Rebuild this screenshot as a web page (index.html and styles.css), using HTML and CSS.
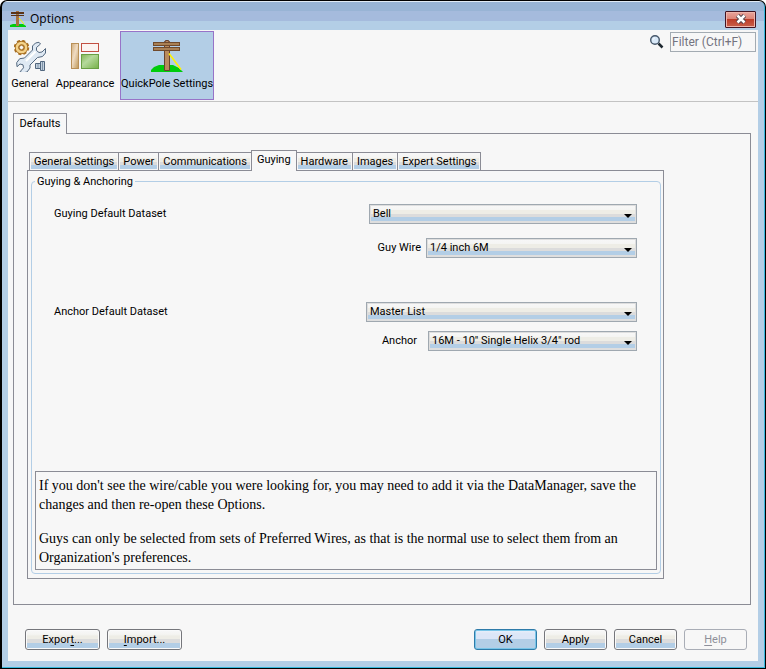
FILE: index.html
```html
<!DOCTYPE html>
<html lang="en">
<head>
<meta charset="utf-8">
<meta name="viewport" content="width=device-width, initial-scale=1">
<title>Options</title>
<link rel="stylesheet" href="styles.css">
</head>
<body>
<div class="window">
  <header class="titlebar">
    <svg class="title-icon" viewBox="0 0 16 16" aria-hidden="true">
      <path d="M0 16v-2l3-1h10l3 2v1z" fill="#00cc0c"/>
      <rect x="6" y="0" width="3" height="15" fill="#a6703f"/>
      <path d="M1 1h13v2H1zM1 4h13v1H1z" fill="#5b3417"/>
      <path d="M9 7l5 6" stroke="#fff200"/>
    </svg>
    <h1 class="title">Options</h1>
    <button class="close" type="button" aria-label="Close">
      <svg viewBox="0 0 12 10" width="12" height="10"><path d="M2.500 1.500 9.500 8.500M9.500 1.500 2.500 8.500" stroke="#4d424b" stroke-width="4.500"/><path d="M2.500 1.500 9.500 8.500M9.500 1.500 2.500 8.500" stroke="#fff" stroke-width="2.500"/></svg>
    </button>
  </header>
  <main class="content">
    <div class="toolbar">
      <nav class="categories" aria-label="Categories">
        <button class="category category-small" type="button">
          <svg width="32" height="32" viewBox="0 0 32 32" fill="none" aria-hidden="true">
            <circle cx="7.500" cy="7.500" r="6" stroke="#a86f22" stroke-width="3.500" stroke-dasharray="2.700 2"/>
            <circle cx="7.500" cy="7.500" r="4.500" stroke="#a86f22" stroke-width="4.500"/>
            <circle cx="7.500" cy="7.500" r="4.600" stroke="#f4d28a" stroke-width="2.500"/>
            <circle cx="7.500" cy="7.500" r="2.200" fill="#f7f7f7" stroke="#a86f22"/>
            <path d="m26.500 4-4 3.500v3l2.500 2 3-.5 3.500-3.500v4.500l-3 3.500-5 1-7.500 7.500v3l-3 4-4 .8-3-1 3.500-4-.5-3-3-.8-3 2.700-.3-4 3-4 4.800-.7 8-8V6l3-3 3.500-.7z" fill="#dfe9f3" stroke="#52677e" stroke-linejoin="round"/>
            <path d="m12 21 9.500-9.500" stroke="#fff" stroke-width="2"/>
            <path d="M21.500 23.500h5v5h-5zM26.500 21.500h4v9h-4z" fill="#c3d1de" stroke="#52677e"/>
            <path d="M24 24v4M28.500 22v8" stroke="#7f93a8"/>
          </svg>
          <span>General</span>
        </button>
        <button class="category" type="button">
          <svg width="32" height="32" viewBox="0 0 32 32" aria-hidden="true">
            <defs>
              <linearGradient id="tan" x2="1" y2="1"><stop offset="0" stop-color="#d0ad7c"/><stop offset=".45" stop-color="#f0dcc3"/><stop offset="1" stop-color="#bd9656"/></linearGradient>
              <linearGradient id="green" x2="1" y2="1"><stop offset="0" stop-color="#83b656"/><stop offset=".4" stop-color="#b5d99c"/><stop offset="1" stop-color="#75b047"/></linearGradient>
            </defs>
            <rect x="2.500" y="3.500" width="7" height="25" fill="url(#tan)" stroke="#b99058"/>
            <rect x="12.500" y="3.500" width="17" height="8" fill="#fbf4f2" stroke="#c24f42"/>
            <rect x="12.500" y="14.500" width="17" height="14" fill="url(#green)" stroke="#699f43"/>
          </svg>
          <span>Appearance</span>
        </button>
        <button class="category category-active" type="button" aria-pressed="true">
          <svg width="32" height="32" viewBox="0 0 32 32" aria-hidden="true">
            <path d="M0 32v-2l3-3 5-2h14l6 3 4 4z" fill="#00cc0c"/>
            <path d="M13.500 30.500V1.500h1v-1h3v1h1v29z" fill="#b98a5e" stroke="#68432f"/>
            <rect x="2.500" y="2.500" width="26" height="3" fill="#a98054" stroke="#704a2c"/>
            <rect x="2.500" y="7.500" width="26" height="3" fill="#a98054" stroke="#704a2c"/>
            <path d="M18 13.500 30 29.500" stroke="#fff200" stroke-width="1.500"/>
          </svg>
          <span>QuickPole Settings</span>
        </button>
      </nav>
      <div class="search">
        <svg width="14" height="14" viewBox="0 0 14 14" fill="none" aria-hidden="true">
          <path d="m8.500 8.500 4 4" stroke="#1e2830" stroke-width="2.500"/>
          <circle cx="5" cy="5" r="4.300" fill="#d9e9f8" stroke="#46576a" stroke-width="1.400"/>
          <path d="M3 5c0-1 1-2 2-2" stroke="#fff"/>
        </svg>
        <input class="filter" type="text" placeholder="Filter (Ctrl+F)" aria-label="Filter">
      </div>
    </div>

    <section class="settings">
      <div class="outer-tabs" role="tablist" aria-label="Pages">
        <button class="outer-tab" type="button" role="tab" aria-selected="true">Defaults</button>
      </div>
      <div class="outer-panel" role="tabpanel">
        <div class="tabs" role="tablist" aria-label="Defaults">
          <button class="tab" type="button" role="tab">General Settings</button>
          <button class="tab" type="button" role="tab">Power</button>
          <button class="tab" type="button" role="tab">Communications</button>
          <button class="tab tab-active" type="button" role="tab" aria-selected="true">Guying</button>
          <button class="tab" type="button" role="tab">Hardware</button>
          <button class="tab" type="button" role="tab">Images</button>
          <button class="tab" type="button" role="tab">Expert Settings</button>
        </div>
        <div class="panel" role="tabpanel">
          <fieldset class="group">
            <legend>Guying &amp; Anchoring</legend>
            <div class="fields">
              <div class="row">
                <label class="main-label" for="guying">Guying Default Dataset</label>
                <span class="combo combo-guying"><select id="guying"><option>Bell</option></select></span>
              </div>
              <div class="row row-sub">
                <label for="wire">Guy Wire</label>
                <span class="combo combo-wire"><select id="wire"><option>1/4 inch 6M</option></select></span>
              </div>
              <div class="row row-anchor">
                <label class="main-label" for="anchors">Anchor Default Dataset</label>
                <span class="combo combo-anchors"><select id="anchors"><option>Master List</option></select></span>
              </div>
              <div class="row row-last">
                <label for="anchor">Anchor</label>
                <span class="combo combo-anchor"><select id="anchor"><option>16M - 10" Single Helix 3/4" rod</option></select></span>
              </div>
            </div>
            <div class="note">
              <p>If you don't see the wire/cable you were looking for, you may need to add it via the DataManager, save the changes and then re-open these Options.</p>
              <p>Guys can only be selected from sets of Preferred Wires, as that is the normal use to select them from an Organization's preferences.</p>
            </div>
          </fieldset>
        </div>
      </div>
    </section>

    <footer class="actions">
      <button class="button button-wide" type="button"><span>Expor<u>t</u>...</span></button>
      <button class="button button-wide" type="button"><span><u>I</u>mport...</span></button>
      <span class="spacer"></span>
      <button class="button button-default" type="button">OK</button>
      <button class="button" type="button">Apply</button>
      <button class="button" type="button">Cancel</button>
      <button class="button" type="button" disabled><span><u>H</u>elp</span></button>
    </footer>
  </main>
</div>
</body>
</html>
```
FILE: styles.css
```css
* { box-sizing: border-box; }

:root {
  --face: #f7f7f7;
  --blue: #b3cee6;
  --line: #8b8c95;
  --ui: Roboto, "Noto Sans", sans-serif;
  --shade: linear-gradient(#f7f7f7 0, #f4f4f1 20%, #eeede6 30%, #eeede6 48%, #dcdcdc 48%, #dcdcdc 68%, #b3cee6 68%);
  --shade-low: linear-gradient(#f7f7f7 0, #f5f5f3 24%, #eeede6 24%, #eeede6 52%, #dcdcdc 52%, #dcdcdc 73%, #b3cee6 73%);
}

body { margin: 0; background: #fff; font: 11px/14px var(--ui); color: #000; }
button, input, select { font: inherit; color: inherit; margin: 0; }
button { cursor: default; white-space: nowrap; }

.window {
  display: flex;
  flex-direction: column;
  min-height: 100vh;
  padding: 1px 7px 7px 6px;
  border: solid #000;
  border-width: 1px 1px 1px 2px;
  border-radius: 7px 7px 0 0;
  background: linear-gradient(#e0ebf5 0, #e0ebf5 1px, #98b4d5 1px, #98b4d5 10px, #a5bbdd 10px, #a5bbdd 20px, #b3cee6 20px);
  box-shadow: inset -1px -1px #38b8dc;
}

.titlebar { display: flex; align-items: center; height: 28px; padding: 6px 2px 0 2px; }
.title-icon { width: 16px; height: 16px; }
.title { flex: 1; margin: 0 0 0 4px; font: 12px/16px "Open Sans", sans-serif; }
.close {
  display: flex;
  align-items: center;
  justify-content: center;
  width: 31px;
  height: 17px;
  padding: 0;
  border: 1px solid #431422;
  border-radius: 1px;
  background: linear-gradient(#e9a49b 0, #dd8578 45%, #bd3d29 50%, #c8604a 100%);
  box-shadow: inset 0 0 0 1px #eeb4ab;
}

.content { display: flex; flex: 1; flex-direction: column; background: var(--face); }

.toolbar { display: flex; justify-content: space-between; padding: 1px 2px; border-bottom: 1px solid #c3c3c3; }
.categories { display: flex; gap: 3px; }
.category {
  display: flex;
  flex-direction: column;
  align-items: center;
  gap: 5px;
  min-width: 64px;
  height: 69px;
  padding: 8px 0 0;
  border: 1px solid transparent;
  background: none;
}
.category-small { min-width: 40px; }
.category-active { min-width: 94px; border-color: #9773c8; background: var(--blue); }
.search { display: flex; align-items: flex-start; gap: 6px; }
.search svg { margin-top: 4px; }
.filter { width: 86px; height: 20px; margin-top: 1px; padding: 0 1px; border: 1px solid #a3abb2; border-radius: 0; background: var(--face); font-size: 12px; }
.filter::placeholder { color: #747480; opacity: 1; }

.settings { display: flex; flex: 1; flex-direction: column; padding: 11px 7px 0 5px; }
.outer-tabs { display: flex; }
.outer-tab { z-index: 1; min-width: 54px; height: 21px; margin-bottom: -1px; padding: 0 5px 1px; border: 1px solid var(--line); border-bottom: 0; background: var(--face); }
.outer-panel { display: flex; flex: 1; flex-direction: column; padding: 16px 86px 25px 13px; border: 1px solid var(--line); }

.tabs { display: flex; align-items: flex-end; padding-left: 2px; }
.tab {
  height: 18px;
  padding: 0 4px;
  margin-right: -1px;
  border: 1px solid var(--line);
  border-bottom: 0;
  background: var(--shade-low) 1px 1px / calc(100% - 2px) 15px no-repeat, var(--face);
}
.tab-active { z-index: 1; height: 21px; margin-bottom: -1px; padding: 0 5px 2px; background: var(--face); }
.panel { display: flex; flex: 1; flex-direction: column; padding: 3px 2px 4px 3px; border: 1px solid var(--line); }

.group { flex: 1; min-width: 0; margin: 0; padding: 0 3px 3px; border: 1px solid var(--blue); border-radius: 4px; }
.group legend { padding: 1px 2px 0; }
.fields { padding: 15px 20px 120px 19px; }
.row { display: flex; align-items: center; justify-content: flex-end; gap: 5px; }
.main-label { margin-right: auto; }
.row-sub { margin-top: 14px; }
.row-anchor { margin-top: 44px; }
.row-last { gap: 11px; margin-top: 9px; }

.combo { position: relative; display: block; }
.combo select {
  display: block;
  width: 100%;
  height: 20px;
  padding: 0 18px 0 3px;
  border: 1px solid #9fa8b0;
  border-radius: 0;
  appearance: none;
  background: var(--shade-low) 1px 1px / calc(100% - 2px) 15px no-repeat, #dedede;
}
.combo::after {
  content: "";
  position: absolute;
  top: 10px;
  right: 5px;
  border: solid transparent;
  border-width: 4px 4px 0;
  border-top-color: #000;
}
.combo-guying { width: 268px; }
.combo-wire { width: 211px; }
.combo-anchors { width: 271px; }
.combo-anchor { width: 209px; }

.note { padding: 4px 3px 2px; border: 1px solid var(--line); font: 14px/19px "Liberation Serif", serif; }
.note p { margin: 0; }
.note p + p { margin-top: 15px; }

.actions { display: flex; gap: 7px; padding: 24px 11px 11px 17px; }
.spacer { flex: 1; }
.button {
  min-width: 63px;
  height: 21px;
  padding: 0 4px;
  border: 1px solid #75767b;
  border-radius: 3px;
  background: var(--shade) 1px 1px / calc(100% - 2px) 17px no-repeat, #fafafa;
}
.button-wide { min-width: 75px; }
.button u { text-underline-offset: 2px; }
.button-default {
  border-color: #2f7ba9;
  background: linear-gradient(#eaf1fb 0, #dce6f7 20%, #dce6f7 48%, #b3cee6 48%);
  box-shadow: inset 0 0 0 1px #79c5e8;
}
.button:disabled { border-color: #a9adb6; background: var(--face); color: #8e8f99; }
```
